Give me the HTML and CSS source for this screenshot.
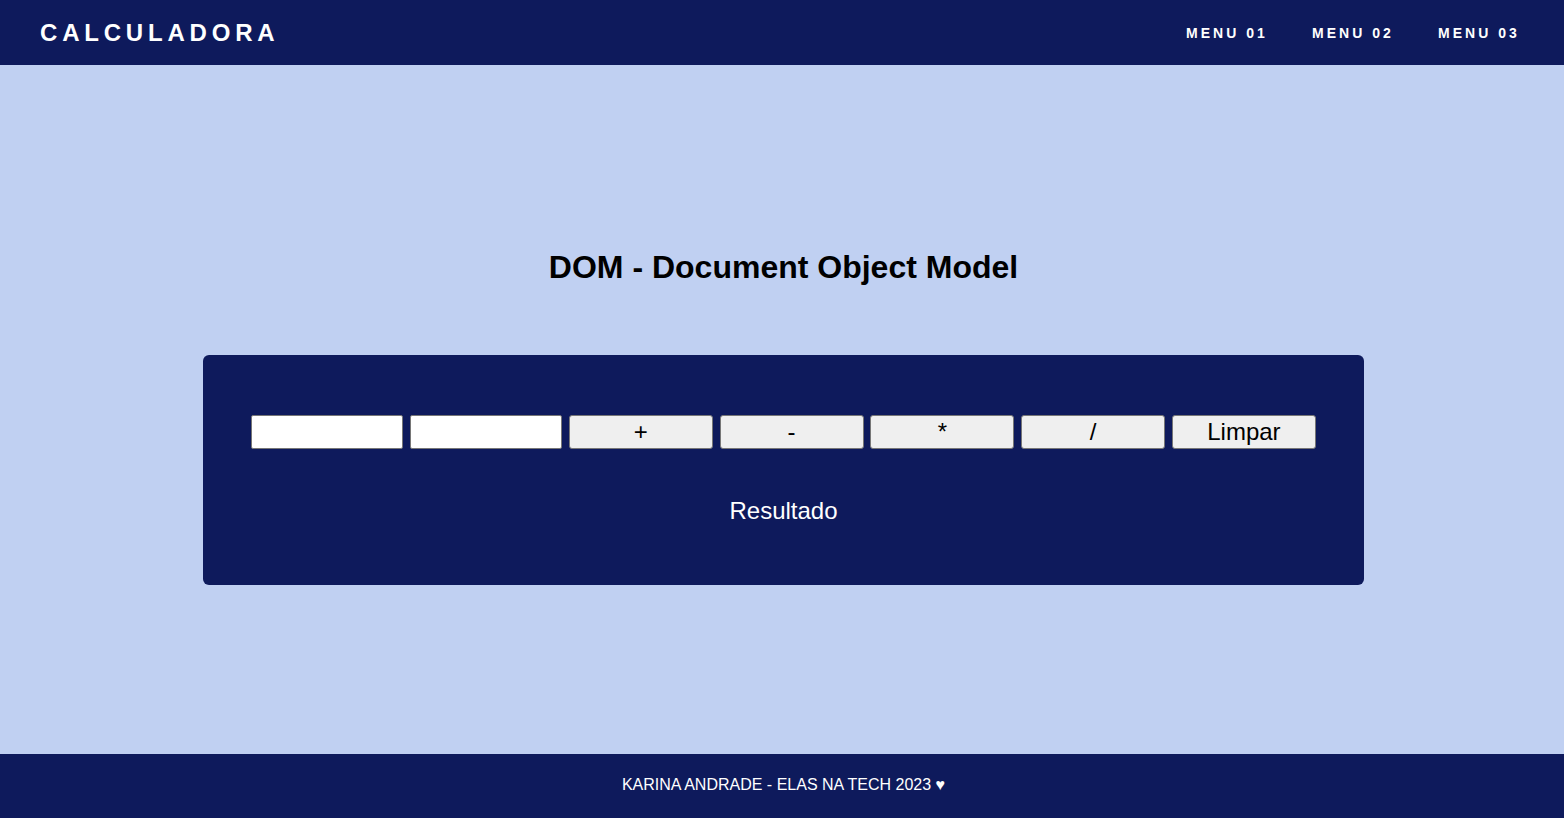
FILE: index.html
```html
<!DOCTYPE html>
<html lang="pt-BR">
<head>
<meta charset="utf-8">
<title>Calculadora</title>
<link rel="stylesheet" href="styles.css">
</head>
<body>
<header class="topbar">
  <div class="brand">CALCULADORA</div>
  <nav class="menu">
    <a href="#" class="menu-link">MENU 01</a>
    <a href="#" class="menu-link">MENU 02</a>
    <a href="#" class="menu-link">MENU 03</a>
  </nav>
</header>
<main class="content">
  <h1 class="title">DOM - Document Object Model</h1>
  <section class="card">
    <div class="controls">
      <input class="field" type="text">
      <input class="field" type="text">
      <button class="btn">+</button>
      <button class="btn">-</button>
      <button class="btn">*</button>
      <button class="btn">/</button>
      <button class="btn">Limpar</button>
    </div>
    <p class="result">Resultado</p>
  </section>
</main>
<footer class="footer">KARINA ANDRADE - ELAS NA TECH 2023 ♥</footer>
</body>
</html>
```
FILE: styles.css
```css
* { box-sizing: border-box; }
html, body { margin: 0; padding: 0; }
body {
  font-family: "Liberation Sans", Arial, sans-serif;
  background: #c0d0f2;
  min-height: 100vh;
  display: flex;
  flex-direction: column;
}
.topbar {
  height: 65px;
  background: #0e1a5c;
  display: flex;
  align-items: center;
  justify-content: space-between;
  padding: 0 40px;
  color: #fff;
}
.brand {
  font-size: 24px;
  font-weight: bold;
  letter-spacing: 4.8px;
}
.menu {
  display: flex;
  gap: 44.3px;
  padding-right: 4.3px;
}
.menu-link {
  color: #fff;
  text-decoration: none;
  font-size: 14px;
  font-weight: bold;
  letter-spacing: 3px;
}
.content {
  flex: 1;
  display: flex;
  flex-direction: column;
  align-items: center;
  padding-top: 184px;
  padding-left: 3px;
}
.title {
  margin: 0;
  font-size: 32px;
  font-weight: bold;
  color: #000;
}
.card {
  margin-top: 69px;
  width: 1161px;
  background: #0e1a5c;
  border-radius: 6px;
  padding: 60px 48px;
  display: flex;
  flex-direction: column;
  align-items: center;
}
.controls {
  display: flex;
  gap: 6.8px;
}
.field {
  width: 152px;
  height: 34px;
  border: 1px solid #767676;
  border-radius: 2px;
  background: #fff;
  margin: 0;
}
.btn {
  width: 144px;
  height: 34px;
  border: 1px solid #767676;
  border-radius: 3px;
  background: #efefef;
  font-family: "Liberation Sans", Arial, sans-serif;
  font-size: 24px;
  color: #000;
  padding: 0;
  margin: 0;
  line-height: 1;
}
.result {
  margin: 48px 0 0;
  color: #fff;
  font-size: 24px;
}
.footer {
  height: 64px;
  background: #0e1a5c;
  color: #fff;
  font-size: 16px;
  display: flex;
  align-items: center;
  justify-content: center;
  padding: 0 0 2px 3px;
}
```
